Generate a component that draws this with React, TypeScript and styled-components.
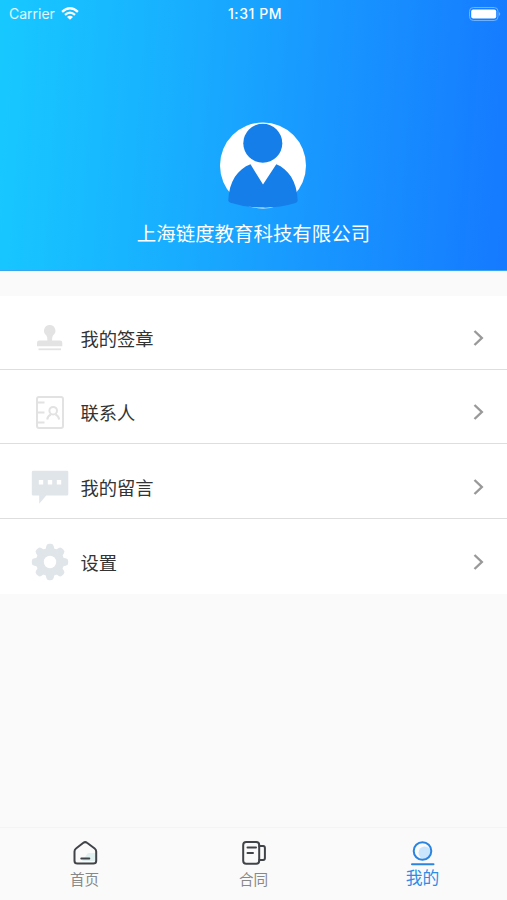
import React from "react";
import styled, { createGlobalStyle } from "styled-components";

const GlobalStyle = createGlobalStyle`
  * { box-sizing: border-box; }
  body {
    margin: 0;
    background: #fafafa;
    font-family: Inter, "Noto Sans CJK SC", sans-serif;
  }
`;

const Screen = styled.div`
  display: flex;
  flex-direction: column;
  width: 507px;
  height: 900px;
  overflow: hidden;
  background: #fafafa;
`;

const Header = styled.header`
  display: flex;
  flex-direction: column;
  align-items: center;
  height: 271px;
  flex-shrink: 0;
  color: #fff;
  background: linear-gradient(94deg, #17c8ff 1%, #18acff 38%, #1895ff 65%, #157aff 99%);
  border-bottom: 1px solid #38a5ee;
`;

const StatusBar = styled.div`
  display: grid;
  grid-template-columns: 1fr auto 1fr;
  align-items: center;
  width: 100%;
  height: 27px;
  padding: 0 6px 0 9px;
`;

const Carrier = styled.div`
  display: flex;
  align-items: center;
  gap: 6px;
  font-size: 14px;
  color: #e3f7ff;
`;

const Clock = styled.div`
  font-size: 14px;
  font-weight: 500;
  letter-spacing: 0.55px;
`;

const BatteryIcon = styled.svg`
  justify-self: end;
`;

const Avatar = styled.svg`
  margin: 94px 0 0 19px;
`;

const Company = styled.div`
  margin-top: 10px;
  font-size: 19.45px;
  line-height: 28px;
  font-family: "Noto Sans CJK SC", sans-serif;
`;

const Menu = styled.main`
  margin-top: 25px;
`;

const MenuRow = styled.div<{ $height: number; $last?: boolean }>`
  display: grid;
  grid-template-columns: 40px 1fr auto;
  column-gap: 10.5px;
  align-items: center;
  height: ${(p) => p.$height}px;
  padding: 11px 21px 0 30px;
  background: #fff;
  border-bottom: ${(p) => (p.$last ? "none" : "1px solid #dedede")};
`;

const MenuLabel = styled.span`
  font: 400 18.3px/26px "Noto Sans CJK SC", sans-serif;
  color: #333;
`;

const TabBar = styled.nav`
  display: grid;
  grid-template-columns: repeat(3, 1fr);
  height: 73px;
  margin-top: auto;
  border-top: 1px solid #f4f4f4;
  background: #fafafa;
`;

const Tab = styled.div<{ $active?: boolean }>`
  display: flex;
  flex-direction: column;
  align-items: center;
  padding-top: 11px;
  font: 400 ${(p) => (p.$active ? "16.8px" : "14.6px")}/22px "Noto Sans CJK SC", sans-serif;
  color: ${(p) => (p.$active ? "#2b8de6" : "#888")};
`;

const TabLabel = styled.span<{ $active?: boolean }>`
  margin-top: ${(p) => (p.$active ? "-1px" : "1px")};
`;

const Wifi = () => (
  <svg width="18" height="14" viewBox="0 0 18 14" fill="none" stroke="#fff" strokeWidth="2.3">
    <path d="M1.1 4.8 Q9 -2.3 16.9 4.8" />
    <path d="M4 7.8 Q9 3.4 14 7.8" />
    <path d="M6 10 Q9 7.3 12 10 L9 12.8Z" fill="#fff" stroke="none" />
  </svg>
);

const Battery = () => (
  <BatteryIcon width="33" height="14" viewBox="0 0 33 14">
    <rect x="1.5" y="0.5" width="28.5" height="13" rx="3.8" fill="none" stroke="#6db2ff" />
    <rect x="3.2" y="2.4" width="25" height="9.2" rx="2" fill="#fff" />
    <path d="M31.2 5 Q33.2 7 31.2 9Z" fill="#83beff" />
  </BatteryIcon>
);

const Person = () => (
  <Avatar width="88" height="88" viewBox="0 0 88 88">
    <circle cx="44" cy="44.5" r="43" fill="#fff" />
    <circle cx="43.8" cy="22.2" r="19.5" fill="#157ee9" />
    <path
      d="M31.5 43.3 L44 63.6 L57.3 43.3 C69 48 78 60 78.7 79.5 Q78.7 81 76.5 82 Q60 87 44 86.6 Q27 86.8 11.5 81.8 Q9.3 81 9.3 79.5 C10 60 19 48 31.5 43.3Z"
      fill="#157ee9"
    />
  </Avatar>
);

const StampIcon = () => (
  <svg width="40" height="40" viewBox="0 0 40 40" fill="#e3e3e3">
    <path d="M19.7 7 A5.8 5.8 0 0 1 23 17.5 Q22 18.5 22 22.5 H30 Q32.3 22.5 32.3 24.7 V28.3 H7 V24.7 Q7 22.5 9.3 22.5 H17.4 Q17.4 18.5 16.4 17.5 A5.8 5.8 0 0 1 19.7 7Z" />
    <path d="M8.5 31.3 H31" stroke="#e3e3e3" strokeWidth="1.8" />
  </svg>
);

const ContactsIcon = () => (
  <svg width="40" height="40" viewBox="0 0 40 40" fill="none" stroke="#e2e2e2" strokeWidth="2">
    <rect x="7" y="5" width="26" height="31" rx="2" />
    <path d="M7 10.5 H14.5 M7 20.5 H14.5 M7 30.5 H14.5" />
    <circle cx="23.2" cy="18.7" r="3.8" />
    <path d="M17.2 27.5 Q17.7 23.8 21 22.5 M25.5 22.5 Q28.5 23.8 29.2 27.5" />
  </svg>
);

const MessageIcon = () => (
  <svg width="40" height="40" viewBox="0 0 40 40">
    <path d="M3.2 3.8 H37 Q38.3 3.8 38.3 5.1 V27.3 Q38.3 28.5 37 28.5 H16.2 L9.2 36.8 V28.5 H3 Q1.8 28.5 1.8 27.3 V5.1 Q1.8 3.8 3.2 3.8Z" fill="#e0e5e9" />
    <path d="M8.8 13 H13.2 V17.4 H8.8Z M17.8 13 H22.2 V17.4 H17.8Z M26.8 13 H31.2 V17.4 H26.8Z" fill="#fff" />
  </svg>
);

const GearIcon = () => (
  <svg width="40" height="40" viewBox="0 0 40 40">
    <g fill="#e0e5e9">
      <circle cx="20" cy="20" r="14" />
      {[0, 45, 90, 135, 180, 225, 270, 315].map((angle) => (
        <path
          key={angle}
          d="M14.7 8 Q16.2 6.7 16.2 4.4 Q16.5 1.8 19 1.8 H21 Q23.5 1.8 23.8 4.4 Q23.8 6.7 25.3 8Z"
          transform={`rotate(${angle} 20 20)`}
        />
      ))}
    </g>
    <circle cx="20" cy="20" r="6.2" fill="#fff" />
  </svg>
);

const Chevron = () => (
  <svg width="14" height="18" viewBox="0 0 14 18" fill="none" stroke="#999" strokeWidth="2.4">
    <path d="M2.5 2 L9.8 9 L2.5 16" />
  </svg>
);

const HomeIcon = () => (
  <svg width="28" height="28" viewBox="0 0 28 28" fill="none" strokeLinecap="round" strokeLinejoin="round">
    <path d="M17 14 H24 V22 H11Z" fill="#e0efef" />
    <path d="M12.4 3.8 Q14.2 2.4 16 3.8 L23.7 9.5 Q25.2 10.6 25.2 12.5 V22 Q25.2 24.6 22.2 24.6 H6.5 Q3.5 24.6 3.5 22 V12.5 Q3.5 10.6 5 9.5Z" stroke="#404347" strokeWidth="2" />
    <path d="M10.3 19.5 H18.3" stroke="#404347" strokeWidth="2" />
  </svg>
);

const ContractIcon = () => (
  <svg width="28" height="28" viewBox="0 0 28 28" fill="none" stroke="#404347" strokeWidth="2" strokeLinecap="round" strokeLinejoin="round">
    <rect x="3.2" y="3" width="16" height="21.7" rx="3" />
    <path d="M19.2 7 H23.2 Q24.9 7 24.9 9 V19 Q24.9 21 23.2 21 H19.2" />
    <path d="M7.5 8.5 H16 M7.5 14 H13" />
  </svg>
);

const ProfileIcon = () => (
  <svg width="28" height="28" viewBox="0 0 28 28" fill="none" stroke="#2b84df" strokeWidth="2" strokeLinecap="round">
    <circle cx="15.8" cy="13.8" r="6.3" fill="#c9e6fc" stroke="none" />
    <circle cx="13.5" cy="12" r="8.8" />
    <path d="M3 25.3 H24.5" />
  </svg>
);

const items = [
  { label: "我的签章", Icon: StampIcon, height: 74 },
  { label: "联系人", Icon: ContactsIcon, height: 74 },
  { label: "我的留言", Icon: MessageIcon, height: 75 },
  { label: "设置", Icon: GearIcon, height: 75 },
];

const tabs = [
  { label: "首页", Icon: HomeIcon },
  { label: "合同", Icon: ContractIcon },
  { label: "我的", Icon: ProfileIcon, active: true },
];

export default function App() {
  return (
    <>
      <GlobalStyle />
      <Screen>
        <Header>
          <StatusBar>
            <Carrier>
              Carrier
              <Wifi />
            </Carrier>
            <Clock>1:31 PM</Clock>
            <Battery />
          </StatusBar>
          <Person />
          <Company>上海链度教育科技有限公司</Company>
        </Header>
        <Menu>
          {items.map(({ label, Icon, height }, index) => (
            <MenuRow key={label} $height={height} $last={index === items.length - 1}>
              <Icon />
              <MenuLabel>{label}</MenuLabel>
              <Chevron />
            </MenuRow>
          ))}
        </Menu>
        <TabBar>
          {tabs.map(({ label, Icon, active }) => (
            <Tab key={label} $active={active}>
              <Icon />
              <TabLabel $active={active}>{label}</TabLabel>
            </Tab>
          ))}
        </TabBar>
      </Screen>
    </>
  );
}
